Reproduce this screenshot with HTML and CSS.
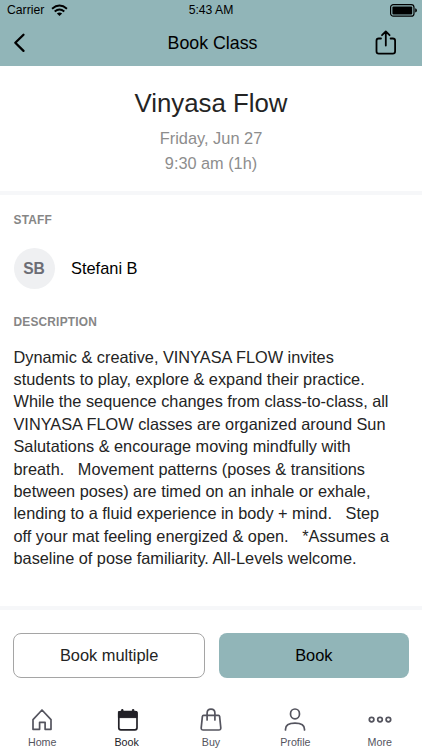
FILE: index.html
```html
<!DOCTYPE html>
<html lang="en">
<head>
<meta charset="utf-8">
<meta name="viewport" content="width=device-width, initial-scale=1">
<title>Book Class</title>
<link rel="stylesheet" href="styles.css">
</head>
<body>
<header class="top">
  <div class="status">
    <div class="carrier"><span>Carrier</span>
      <svg width="17" height="13" viewBox="0 0 18 13" fill="none" stroke="#000" stroke-width="2"><path d="M1.1 4.6Q9 -2 16.9 4.6M3.9 7.6Q9 3.4 14.1 7.6"/><path d="M6.2 9.6Q9 7.6 11.8 9.6L9 12.4Z" fill="#000" stroke="none"/></svg>
    </div>
    <span class="time">5:43 AM</span>
    <svg class="battery" width="28" height="13" viewBox="0 0 28 13"><rect x=".6" y=".6" width="23.4" height="11.6" rx="2.8" fill="none" stroke="#000" stroke-width="1.2"/><rect x="2.4" y="2.4" width="19.8" height="8" rx="1" fill="#000"/><path d="M25.2 4.2Q27 4.8 27 6.4T25.2 8.6Z" fill="#000"/></svg>
  </div>
  <div class="bar">
    <svg class="back" width="14" height="20" viewBox="0 0 14 20" fill="none" stroke="#000" stroke-width="2.3" stroke-linecap="round" stroke-linejoin="round"><path d="M11.5 1.7 3.3 9.8l8.2 8.1"/></svg>
    <h1>Book Class</h1>
    <svg class="share" width="22" height="26" viewBox="0 0 22 26" fill="none" stroke="#000" stroke-width="1.8" stroke-linecap="round" stroke-linejoin="round"><path d="M6 8.5H3.8Q1.5 8.5 1.5 10.8V21.3Q1.5 23.7 3.8 23.7H17.8Q20.1 23.7 20.1 21.3V10.8Q20.1 8.5 17.8 8.5H15.6M10.8 15.5V1.7M7 5.2 10.8 1.5l3.8 3.7"/></svg>
  </div>
</header>
<section class="summary">
  <h2>Vinyasa Flow</h2>
  <p class="date">Friday, Jun 27</p>
  <p>9:30 am (1h)</p>
</section>
<main class="details">
  <h3>STAFF</h3>
  <div class="staff"><span class="avatar">SB</span><span class="name">Stefani B</span></div>
  <h3>DESCRIPTION</h3>
  <p class="description">Dynamic &amp; creative, VINYASA FLOW invites
students to play, explore &amp; expand their practice.
While the sequence changes from class-to-class, all
VINYASA FLOW classes are organized around Sun
Salutations &amp; encourage moving mindfully with
breath.   Movement patterns (poses &amp; transitions
between poses) are timed on an inhale or exhale,
lending to a fluid experience in body + mind.   Step
off your mat feeling energized &amp; open.   *Assumes a
baseline of pose familiarity. All-Levels welcome.</p>
</main>
<div class="actions">
  <button class="outline">Book multiple</button>
  <button class="filled">Book</button>
</div>
<nav class="tabs">
  <a><svg width="26" height="26" viewBox="0 0 26 26"><path d="M4 12.6 13 3l9 9.6V22.3H16.1V15.3H10.6V22.3H4Z"/></svg><span>Home</span></a>
  <a class="active"><svg width="26" height="26" viewBox="0 0 26 26"><rect x="4.8" y="4.6" width="18.2" height="18.2" rx="2"/><path class="solid" d="M4.8 4.6H23V10.6H4.8ZM8 2.6H9V5H8ZM18.8 2.6H19.8V5H18.8Z"/></svg><span>Book</span></a>
  <a><svg width="26" height="26" viewBox="0 0 26 26"><path d="M5.5 8.3H20.5Q21.4 8.3 21.6 9.3L22.8 20.8Q22.9 23 20.8 23H5.2Q3.1 23 3.2 20.8L4.4 9.3Q4.6 8.3 5.5 8.3ZM9.1 13V6.3Q9.1 2.2 13 2.2T16.9 6.3V13"/></svg><span>Buy</span></a>
  <a><svg width="26" height="26" viewBox="0 0 26 26"><ellipse cx="13" cy="6.9" rx="4.5" ry="4.9"/><path d="M3.5 23V22.3Q3.5 16.2 13 16.2T22.5 22.3V23"/></svg><span>Profile</span></a>
  <a><svg width="26" height="26" viewBox="0 0 26 26"><circle cx="4.6" cy="12.6" r="2.3"/><circle cx="13" cy="12.6" r="2.3"/><circle cx="21.4" cy="12.6" r="2.3"/></svg><span>More</span></a>
</nav>
</body>
</html>
```
FILE: styles.css
```css
* { box-sizing: border-box; }
body {
  margin: 0;
  width: 422px;
  height: 750px;
  overflow: hidden;
  display: flex;
  flex-direction: column;
  background: #fff;
  color: #242424;
  font-family: "Liberation Sans", Arial, sans-serif;
}
h1, h2, h3, p { margin: 0; font-weight: 400; }
svg { display: block; flex: none; }

.top { height: 66px; flex: none; background: #91b5b8; color: #000; }
.status {
  height: 20px;
  padding: 0 4px 0 7px;
  display: grid;
  grid-template-columns: 1fr auto 1fr;
  align-items: center;
  font-size: 12.2px;
}
.carrier { display: flex; align-items: center; gap: 7px; }
.time { margin-right: 3px; }
.battery { justify-self: end; }
.bar {
  height: 46px;
  padding: 0 25px 0 12px;
  display: grid;
  grid-template-columns: 1fr auto 1fr;
  align-items: center;
}
.bar h1 { font-size: 17.8px; line-height: 22px; margin-left: 16px; }
.share { justify-self: end; }

.summary {
  height: 129px;
  flex: none;
  padding-top: 21px;
  border-bottom: 4px solid #f6f7f9;
  text-align: center;
}
.summary h2 { font-size: 25.8px; line-height: 32px; margin-bottom: 7px; }
.summary p { font-size: 16.3px; line-height: 24.5px; color: #8d8d8d; }
.summary .date { font-size: 16.4px; }

.details { height: 415px; flex: none; padding: 18px 13.5px 0; border-bottom: 4px solid #f6f7f9; }
.details h3 { font-size: 11.9px; line-height: 14px; font-weight: 700; letter-spacing: .2px; color: #868686; }
.staff { display: flex; align-items: center; gap: 16.5px; margin: 21px 0 26px; }
.avatar {
  width: 41px;
  height: 41px;
  border-radius: 50%;
  display: grid;
  place-items: center;
  background: #eff0f2;
  color: #6c6d75;
  font-size: 15.6px;
  font-weight: 700;
}
.name { color: #000; font-size: 16.4px; }
.description { margin-top: 16.5px; white-space: pre; font-size: 16.31px; line-height: 22.4px; }

.actions { height: 82px; flex: none; display: flex; gap: 13.5px; padding: 23px 13px 0; }
.actions button {
  flex: 1;
  height: 45px;
  padding: 0;
  border: 0;
  border-radius: 8px;
  font: 16.4px "Liberation Sans", Arial, sans-serif;
}
.actions .outline { background: #fff; border: 1px solid #a5a5a5; color: #242424; }
.actions .filled { background: #91b5b8; color: #000; }

.tabs { flex: 1; display: grid; grid-template-columns: repeat(5, 1fr); padding-top: 15px; }
.tabs a { display: flex; flex-direction: column; align-items: center; color: #54545e; font-size: 10.7px; line-height: 14px; gap: 2px; }
.tabs svg { fill: none; stroke: currentColor; stroke-width: 1.7; stroke-linejoin: round; stroke-linecap: round; }
.tabs .active { color: #222127; }
.tabs .solid { fill: currentColor; stroke-width: 1; }
```
